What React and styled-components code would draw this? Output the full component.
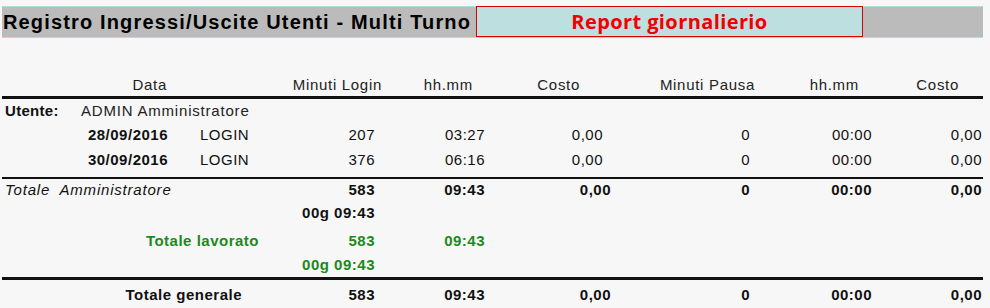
import React from "react";
import styled, { createGlobalStyle } from "styled-components";

const GlobalStyle = createGlobalStyle`
  body {
    margin: 0;
    background-color: #f7f7f7;
    font-family: "Liberation Sans", Arial, sans-serif;
    color: #111;
  }
`;

const Page = styled.div`
  width: 990px;
  height: 308px;
  overflow: hidden;
  padding-top: 6px;
  box-sizing: border-box;
`;

const TitleBar = styled.div`
  display: flex;
  margin: 0 7px 0 2px;
  height: 32px;
  border-top: 1px solid #b3dcdc;
  border-bottom: 1px solid #b3dcdc;
  background-color: #bbbbbb;
  box-sizing: border-box;
`;

const Title = styled.h1`
  margin: 0;
  width: 473px;
  padding-left: 1px;
  font-size: 20px;
  font-weight: bold;
  letter-spacing: 1.15px;
  line-height: 30px;
  white-space: nowrap;
  overflow: hidden;
  color: #000;
`;

const ReportBox = styled.div`
  width: 387px;
  margin-top: -1px;
  height: 31px;
  box-sizing: border-box;
  background-color: #bddfdf;
  border: 1px solid #d80000;
  color: #f00000;
  font-family: "Open Sans", Lato, sans-serif;
  font-weight: 700;
  font-size: 20px;
  letter-spacing: 0.4px;
  line-height: 29px;
  text-align: center;
`;

const HeaderRow = styled.div`
  display: grid;
  grid-template-columns: 167px 215px 91px 107px 175px 104px 100px;
  margin-top: 35px;
  height: 23px;
  align-items: center;
  font-size: 15px;
  letter-spacing: 0.7px;
  color: #222;
`;

const HeaderCell = styled.div`
  text-align: right;
  white-space: nowrap;
`;

const Rule = styled.div`
  margin: ${(p) => p.$mt || 0}px 7px 0 2px;
  height: ${(p) => p.$size}px;
  background-color: #111;
`;

const UserRow = styled.div`
  display: flex;
  align-items: center;
  height: 23px;
  padding-left: 5px;
  font-size: 15px;
`;

const UserLabel = styled.span`
  width: 76px;
  font-weight: bold;
  letter-spacing: 0.3px;
`;

const UserName = styled.span`
  letter-spacing: 0.8px;
  color: #222;
`;

const Row = styled.div`
  display: grid;
  grid-template-columns: ${(p) =>
    p.$totals
      ? "168px 132px 75px 110px 126px 139px 122px 110px"
      : "168px 132px 75px 110px 118px 147px 122px 110px"};
  align-items: center;
  height: ${(p) => p.$h}px;
  font-size: 15px;
  color: ${(p) => (p.$green ? "#1b8a1b" : "#111")};
  font-weight: ${(p) => (p.$bold ? "bold" : "normal")};
  letter-spacing: 0.5px;
`;

const Cell = styled.div`
  text-align: ${(p) => p.$align || "right"};
  white-space: nowrap;
  padding-left: ${(p) => p.$pl || 0}px;
  padding-right: ${(p) => p.$pr || 0}px;
  grid-column: ${(p) => p.$span || "auto"};
  font-weight: ${(p) => (p.$bold ? "bold" : "inherit")};
`;

const ItalicLabel = styled(Cell)`
  font-style: italic;
  font-weight: normal;
  letter-spacing: 0.8px;
`;

const headers = ["Data", "Minuti Login", "hh.mm", "Costo", "Minuti Pausa", "hh.mm", "Costo"];

const details = [
  { date: "28/09/2016", min: "207", hh: "03:27" },
  { date: "30/09/2016", min: "376", hh: "06:16" },
];

const TotalValues = ({ min, hh }) => (
  <>
    <Cell>{min}</Cell>
    <Cell>{hh}</Cell>
    <Cell>0,00</Cell>
    <Cell>0</Cell>
    <Cell>00:00</Cell>
    <Cell>0,00</Cell>
  </>
);

const App = () => {
  return (
    <Page>
      <GlobalStyle />
      <TitleBar>
        <Title>Registro Ingressi/Uscite Utenti - Multi Turno</Title>
        <ReportBox>Report giornalierio</ReportBox>
      </TitleBar>

      <HeaderRow>
        {headers.map((h, i) => (
          <HeaderCell key={i}>{h}</HeaderCell>
        ))}
      </HeaderRow>
      <Rule $size={3} />

      <UserRow>
        <UserLabel>Utente:</UserLabel>
        <UserName>ADMIN Amministratore</UserName>
      </UserRow>

      {details.map((d) => (
        <Row key={d.date} $h={25}>
          <Cell $bold>{d.date}</Cell>
          <Cell $align="left" $pl={32}>LOGIN</Cell>
          <Cell>{d.min}</Cell>
          <Cell>{d.hh}</Cell>
          <Cell>0,00</Cell>
          <Cell>0</Cell>
          <Cell>00:00</Cell>
          <Cell>0,00</Cell>
        </Row>
      ))}
      <Rule $size={2} $mt={5} />

      <Row $h={20} $bold $totals>
        <ItalicLabel $span="1 / 3" $align="left" $pl={5}>
          Totale&nbsp; Amministratore
        </ItalicLabel>
        <TotalValues min="583" hh="09:43" />
      </Row>
      <Row $h={26} $bold>
        <Cell $span="1 / 4">00g 09:43</Cell>
      </Row>
      <Row $h={30} $bold $green>
        <Cell $span="1 / 3" $pr={41}>Totale lavorato</Cell>
        <Cell>583</Cell>
        <Cell>09:43</Cell>
      </Row>
      <Row $h={19} $bold $green>
        <Cell $span="1 / 4">00g 09:43</Cell>
      </Row>
      <Rule $size={3} $mt={3} />

      <Row $h={28} $bold $totals>
        <Cell $span="1 / 3" $pr={58}>Totale generale</Cell>
        <TotalValues min="583" hh="09:43" />
      </Row>
    </Page>
  );
};

export default App;
